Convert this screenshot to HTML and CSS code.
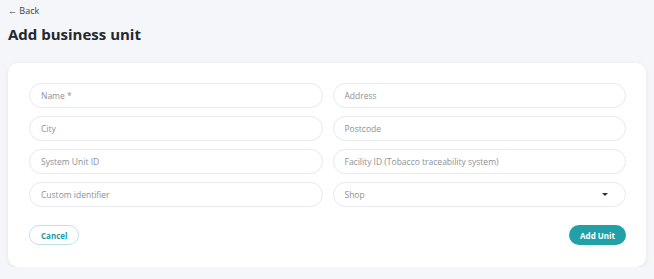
FILE: index.html
```html
<!DOCTYPE html>
<html lang="en">
  <head>
    <meta charset="UTF-8" />
    <title>Add business unit</title>
    <link rel="stylesheet" href="styles.css">
  </head>
  <body>
    <a class="back-link" href="#">&larr; Back</a>
    <h1>Add business unit</h1>

    <form class="card">
      <div class="form-grid">
        <input class="field" type="text" placeholder="Name *" />
        <input class="field" type="text" placeholder="Address" />
        <input class="field" type="text" placeholder="City" />
        <input class="field" type="text" placeholder="Postcode" />
        <input class="field" type="text" placeholder="System Unit ID" />
        <input class="field" type="text" placeholder="Facility ID (Tobacco traceability system)" />
        <input class="field" type="text" placeholder="Custom identifier" />
        <div class="field select">
          <span>Shop</span>
          <span class="caret"></span>
        </div>
      </div>
      <div class="actions">
        <button type="button" class="btn btn-outline">Cancel</button>
        <button type="button" class="btn btn-primary">Add Unit</button>
      </div>
    </form>
  </body>
</html>
```

FILE: styles.css
```css
html {
  background-color: #f5f6fa;
}
body {
  font-family: "Open Sans", "Noto Sans", sans-serif;
  margin: 0;
  padding: 5px 8px 0;
  color: #2b2f36;
}
.back-link {
  display: block;
  font-size: 9px;
  line-height: 11px;
  color: #3b3f46;
  text-decoration: none;
}
h1 {
  font-size: 15px;
  line-height: 20px;
  font-weight: 700;
  margin: 8px 0 19px;
  color: #24272d;
}
.card {
  background-color: white;
  border-radius: 10px;
  box-shadow: 0 1px 4px rgba(0, 0, 0, 0.08);
  padding: 20px 20px 22px 21px;
}
.form-grid {
  display: grid;
  grid-template-columns: 1fr 1fr;
  column-gap: 10px;
  row-gap: 8px;
}
.field {
  box-sizing: border-box;
  height: 25px;
  border: 1px solid #e7e9ee;
  border-radius: 13px;
  padding: 0 11px;
  font-family: inherit;
  font-size: 8.5px;
  color: #8c9098;
  background: white;
  outline: none;
}
.field::placeholder {
  color: #8c9098;
}
.select {
  display: flex;
  align-items: center;
  justify-content: space-between;
  padding-right: 17px;
}
.caret {
  width: 0;
  height: 0;
  border-left: 3px solid transparent;
  border-right: 3px solid transparent;
  border-top: 3px solid #2b2f36;
}
.actions {
  display: flex;
  justify-content: space-between;
  margin-top: 18px;
}
.btn {
  height: 20px;
  border-radius: 10px;
  font-family: inherit;
  font-size: 8px;
  font-weight: 700;
  padding: 0 11px;
  cursor: pointer;
}
.btn-outline {
  background: white;
  border: 1px solid #bfe3e5;
  color: #1f9aa2;
}
.btn-primary {
  background-color: #22a0a8;
  border: none;
  color: white;
}
```
